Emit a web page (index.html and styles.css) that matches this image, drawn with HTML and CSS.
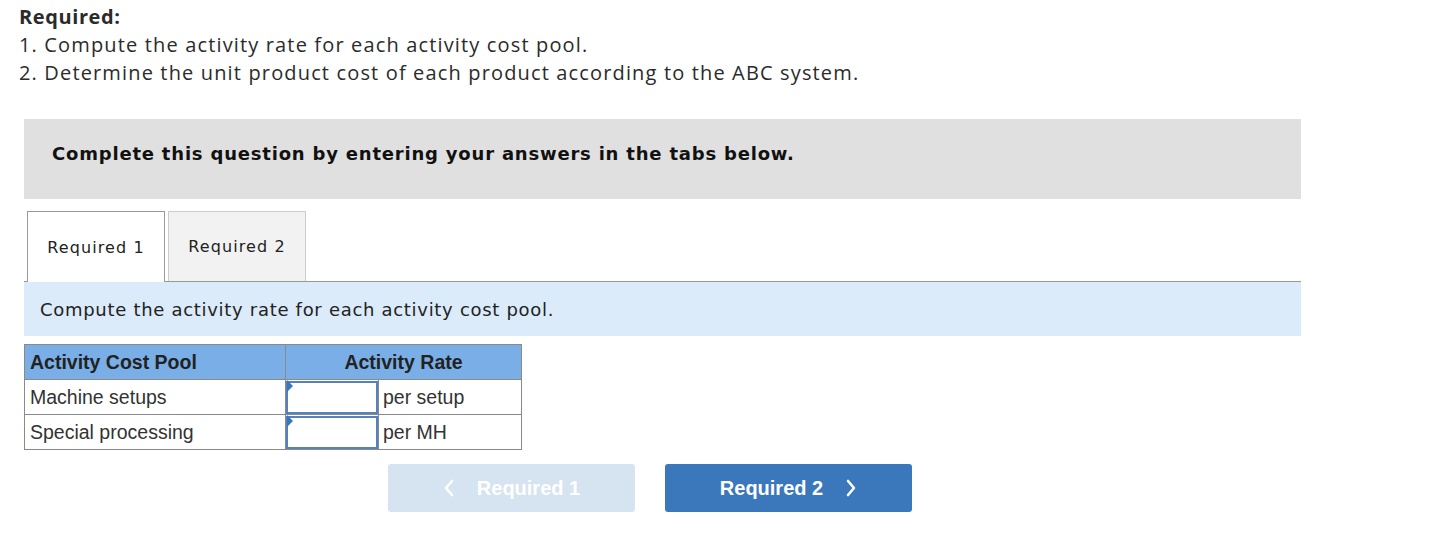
FILE: index.html
```html
<!DOCTYPE html>
<html>
<head>
<meta charset="utf-8">
<link rel="stylesheet" href="styles.css">
</head>
<body>
<div class="page">
  <div class="req">
    <div class="req-title">Required:</div>
    <div class="req-line">1. Compute the activity rate for each activity cost pool.</div>
    <div class="req-line">2. Determine the unit product cost of each product according to the ABC system.</div>
  </div>
  <div class="notice">Complete this question by entering your answers in the tabs below.</div>
  <div class="tabs">
    <div class="tab active">Required 1</div>
    <div class="tab">Required 2</div>
  </div>
  <div class="prompt">Compute the activity rate for each activity cost pool.</div>
  <table class="grid">
    <tr class="head">
      <th class="c1">Activity Cost Pool</th>
      <th class="c2" colspan="2">Activity Rate</th>
    </tr>
    <tr>
      <td class="c1">Machine setups</td>
      <td class="cin"><div class="inbox"><span class="flag"></span></div></td>
      <td class="unit">per setup</td>
    </tr>
    <tr>
      <td class="c1">Special processing</td>
      <td class="cin"><div class="inbox"><span class="flag"></span></div></td>
      <td class="unit">per MH</td>
    </tr>
  </table>
  <div class="nav">
    <div class="btn prev">
      <svg class="chev" width="12" height="18" viewBox="0 0 12 18"><path d="M9 2 L3 9 L9 16" fill="none" stroke="#fff" stroke-width="2.6" stroke-linecap="round" stroke-linejoin="round"/></svg>
      <span class="lbl">Required 1</span>
    </div>
    <div class="btn next">
      <span class="lbl">Required 2</span>
      <svg class="chev" width="12" height="18" viewBox="0 0 12 18"><path d="M3 2 L9 9 L3 16" fill="none" stroke="#fff" stroke-width="2.6" stroke-linecap="round" stroke-linejoin="round"/></svg>
    </div>
  </div>
</div>
</body>
</html>
```
FILE: styles.css
```css
html, body { margin: 0; padding: 0; background: #fff; }
.page { padding: 3px 0 0 0; }
.req { padding-left: 19px; color: #2b2b2b; font-family: "Open Sans", Lato, sans-serif; font-size: 20px; line-height: 28px; letter-spacing: 1.15px; }
.req-title { font-weight: bold; letter-spacing: 0.6px; }
.notice {
  margin: 32px 0 0 24px; width: 1277px; height: 80px; box-sizing: border-box;
  background: #e0e0e0; padding: 0 0 12px 28px; display: flex; align-items: center;
  font-family: "DejaVu Sans", Verdana, sans-serif; font-weight: bold; font-size: 18px; letter-spacing: 0.8px; color: #111;
}
.tabs { display: flex; gap: 3px; margin: 12px 0 0 27px; height: 70px; align-items: flex-end; }
.tab {
  box-sizing: border-box; width: 138px; height: 70px; border: 1px solid #ccc; border-bottom: none;
  background: #f2f2f2; display: flex; align-items: center; justify-content: center;
  font-family: "DejaVu Sans", Verdana, sans-serif; font-size: 16px; letter-spacing: 1.1px; color: #222;
}
.tab.active { background: #fff; border-color: #999; height: 71px; margin-bottom: -1px; position: relative; z-index: 1; }
.prompt {
  margin-left: 24px; width: 1277px; height: 55px; box-sizing: border-box;
  border-top: 1px solid #999; background: #dbebf9; padding-left: 16px;
  display: flex; align-items: center;
  font-family: "DejaVu Sans", Verdana, sans-serif; font-size: 18px; letter-spacing: 0.7px; color: #222;
}
.grid {
  margin: 8px 0 0 24px; border-collapse: collapse; width: 498px;
  font-family: "Liberation Sans", Arial, sans-serif; font-size: 19.5px; color: #333;
}
.grid th, .grid td { border: 1px solid #8a8a8a; padding: 0 5px; height: 35px; box-sizing: border-box; }
.grid .head th { background: #7aaee6; font-weight: bold; color: #222; }
.grid th.c1 { text-align: left; width: 261px; }
.grid th.c2 { text-align: center; }
.grid td.c1 { width: 261px; }
.grid td.cin { padding: 0; width: 93px; }
.inbox { position: relative; box-sizing: border-box; height: 33px; border: 2px solid #5582bd; background: #fff; }
.flag { position: absolute; left: -1px; top: -3px; width: 0; height: 0; border-top: 6px solid transparent; border-bottom: 6px solid transparent; border-left: 6px solid #3a77bb; }
.grid td.unit { padding-left: 4px; }
.nav { display: flex; gap: 30px; margin: 14px 0 0 388px; }
.btn {
  width: 247px; height: 48px; border-radius: 3px; display: flex; align-items: center; justify-content: center;
  font-family: "Liberation Sans", Arial, sans-serif; font-weight: bold; font-size: 20px; color: #fff;
}
.btn.prev { background: #d6e3f1; }
.btn.next { background: #3a77bb; }
.chev { display: block; }
.prev .chev { margin-right: 22px; }
.next .chev { margin-left: 22px; }
```
